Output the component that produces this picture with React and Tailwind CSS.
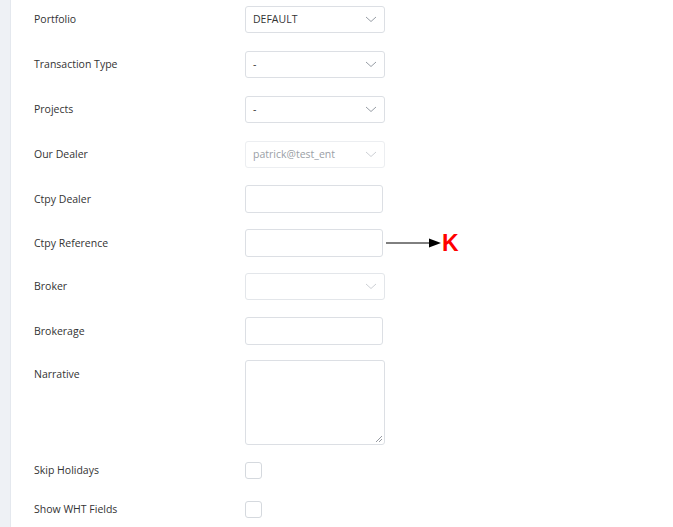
import React from 'react';

const font = { fontFamily: '"Segoe UI", "Open Sans", "Noto Sans", sans-serif' };

function Chevron({ light }) {
  return (
    <svg width="12" height="7" viewBox="0 0 12 7" fill="none" className="shrink-0">
      <path d="M1 1l5 4.5L11 1" stroke={light ? '#cdd0d5' : '#979da5'} strokeWidth="1" />
    </svg>
  );
}

function Select({ value, disabled, dimmed }) {
  return (
    <div
      className={`w-[140px] h-[27px] rounded-[3px] border flex items-center justify-between pl-[7px] pr-[7px] text-[10.5px] ${
        disabled ? 'border-[#eceef1] text-[#9aa0a6]' : dimmed ? 'border-[#e3e6ea] text-[#333]' : 'border-[#dcdfe4] text-[#333]'
      }`}
    >
      <span>{value}</span>
      <Chevron light={disabled || dimmed} />
    </div>
  );
}

function Input() {
  return <div className="w-[138px] h-[28px] rounded-[3px] border border-[#dcdfe4]" />;
}

function Row({ label, mt, children, top }) {
  return (
    <div className={`flex ${top ? 'items-start' : 'items-center'} ${mt}`}>
      <div className={`w-[211px] shrink-0 text-[10.5px] text-[#333] pt-[1px] ${top ? 'pt-[7px]' : ''}`}>{label}</div>
      {children}
    </div>
  );
}

export default function App() {
  return (
    <div className="flex w-[673px] h-[527px] bg-white overflow-hidden" style={font}>
      <div className="w-[11px] shrink-0 bg-[#eef1f5] border-r border-[#e4e8ee]" />
      <div className="flex flex-col pl-[23px]">
        <Row label="Portfolio" mt="mt-[6px]">
          <Select value="DEFAULT" />
        </Row>
        <Row label="Transaction Type" mt="mt-[18px]">
          <Select value="-" />
        </Row>
        <Row label="Projects" mt="mt-[18px]">
          <Select value="-" />
        </Row>
        <Row label="Our Dealer" mt="mt-[18px]">
          <Select value="patrick@test_ent" disabled />
        </Row>
        <Row label="Ctpy Dealer" mt="mt-[17px]">
          <Input />
        </Row>
        <Row label="Ctpy Reference" mt="mt-[16px]">
          <Input />
          <svg width="56" height="12" viewBox="0 0 56 12" className="ml-[3px] shrink-0">
            <line x1="0" y1="6" x2="46" y2="6" stroke="#000" strokeWidth="1" />
            <path d="M43 1.5L55 6L43 10.5z" fill="#000" />
          </svg>
          <span className="text-[23px] font-bold text-[#ff0000] leading-none" style={{ fontFamily: '"Liberation Sans", Arial, sans-serif' }}>
            K
          </span>
        </Row>
        <Row label="Broker" mt="mt-[16px]">
          <Select value="" dimmed />
        </Row>
        <Row label="Brokerage" mt="mt-[17px]">
          <Input />
        </Row>
        <Row label="Narrative" mt="mt-[15px]" top>
          <div className="relative w-[140px] h-[85px] rounded-[3px] border border-[#dcdfe4]">
            <svg width="8" height="8" viewBox="0 0 8 8" className="absolute right-[1px] bottom-[1px]">
              <path d="M7 1L1 7M7 4L4 7" stroke="#8a8f96" strokeWidth="0.9" />
            </svg>
          </div>
        </Row>
        <Row label="Skip Holidays" mt="mt-[17px]">
          <div className="w-[17px] h-[17px] rounded-[3px] border border-[#d5d9de]" />
        </Row>
        <Row label="Show WHT Fields" mt="mt-[22px]">
          <div className="w-[17px] h-[17px] rounded-[3px] border border-[#d5d9de]" />
        </Row>
      </div>
    </div>
  );
}
